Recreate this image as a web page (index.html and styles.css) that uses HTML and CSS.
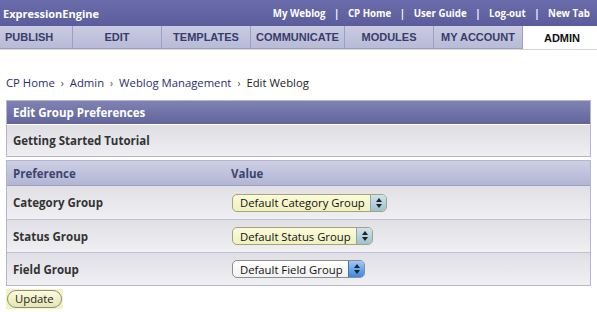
FILE: index.html
```html
<!DOCTYPE html>
<html lang="en">
<head>
  <meta charset="UTF-8" />
  <title>ExpressionEngine - Edit Weblog</title>
  <link rel="stylesheet" href="styles.css">
</head>
<body>

<div class="topbar">
  <span class="brand">ExpressionEngine</span>
  <nav class="toplinks">
    <a href="#">My Weblog</a><span class="sep">|</span><a href="#">CP Home</a><span class="sep">|</span><a href="#">User Guide</a><span class="sep">|</span><a href="#">Log-out</a><span class="sep">|</span><a href="#">New Tab</a>
  </nav>
</div>

<ul class="tabs">
  <li>PUBLISH</li>
  <li>EDIT</li>
  <li>TEMPLATES</li>
  <li>COMMUNICATE</li>
  <li>MODULES</li>
  <li>MY ACCOUNT</li>
  <li class="active">ADMIN</li>
</ul>

<div class="content">
  <div class="crumbs">
    <a href="#">CP Home</a><span class="arr">›</span><a href="#">Admin</a><span class="arr">›</span><a href="#">Weblog Management</a><span class="arr">›</span><span class="here">Edit Weblog</span>
  </div>

  <table class="box">
    <tr><th class="title">Edit Group Preferences</th></tr>
    <tr><td class="plain">Getting Started Tutorial</td></tr>
  </table>

  <table class="box prefs">
    <tr class="head">
      <th class="col1">Preference</th>
      <th>Value</th>
    </tr>
    <tr>
      <td class="col1">Category Group</td>
      <td><span class="select filled">Default Category Group<i class="knob"></i></span></td>
    </tr>
    <tr>
      <td class="col1">Status Group</td>
      <td><span class="select filled">Default Status Group<i class="knob"></i></span></td>
    </tr>
    <tr>
      <td class="col1">Field Group</td>
      <td><span class="select">Default Field Group<i class="knob blue"></i></span></td>
    </tr>
  </table>

  <div class="submit"><button>Update</button></div>
</div>

</body>
</html>
```

FILE: styles.css
```css
* {
  box-sizing: border-box;
}
body {
  margin: 0;
  font-family: "Open Sans", "DejaVu Sans", sans-serif;
  font-size: 11.5px;
  color: #222;
  background: #fff;
}
a {
  text-decoration: none;
}

/* top bar */
.topbar {
  display: flex;
  justify-content: space-between;
  align-items: center;
  height: 26px;
  padding: 0 7px 0 3px;
  background: linear-gradient(#6a6cab, #5a5c9c);
  color: #fff;
  font-weight: bold;
  font-size: 11px;
}
.toplinks {
  display: flex;
  font-size: 9.7px;
}
.toplinks a {
  color: #fff;
}
.toplinks .sep {
  margin: 0 8.5px;
}

/* tabs */
.tabs {
  display: flex;
  margin: 0;
  padding: 0;
  list-style: none;
  height: 24px;
  background: #fff;
  border-bottom: 1px solid #d6d6de;
}
.tabs li {
  display: flex;
  align-items: center;
  justify-content: center;
  font-family: "Liberation Sans", Arial, sans-serif;
  font-weight: bold;
  font-size: 11px;
  color: #383c6c;
  background: linear-gradient(#c9cbe2, #b8bbd7);
  border-right: 1px solid #9c9fc4;
  border-bottom: 1px solid #9c9fc4;
}
.tabs li:nth-child(1) { width: 73px; justify-content: flex-start; padding-left: 5px; }
.tabs li:nth-child(2) { width: 89px; }
.tabs li:nth-child(3) { width: 89px; }
.tabs li:nth-child(4) { width: 94px; }
.tabs li:nth-child(5) { width: 89px; }
.tabs li:nth-child(6) { width: 89px; }
.tabs li.active {
  flex: 1;
  background: #fff;
  border: none;
  color: #111;
  padding-left: 4px;
}

/* content */
.content {
  padding: 0 6px;
}
.crumbs {
  margin: 25px 0 10px;
  font-size: 11.3px;
  color: #222;
}
.crumbs a {
  color: #2a2e72;
}
.crumbs .arr {
  margin: 0 6px;
  font-size: 10px;
  color: #444;
}

table.box {
  width: 585px;
  border-collapse: separate;
  border-spacing: 0;
  border: 1px solid #b4b5d2;
  margin-bottom: 3px;
}
.box th.title {
  height: 24px;
  padding: 0 6px;
  text-align: left;
  color: #fff;
  background: linear-gradient(#7f82b2, #62659c);
  border-bottom: 1px solid #fff;
}
.box td.plain {
  height: 31px;
  padding: 0 6px;
  font-weight: bold;
  color: #333;
  background: linear-gradient(#dedee3, #efeff2);
}

.prefs tr.head th {
  height: 25px;
  padding: 0;
  text-align: left;
  color: #40436e;
  background: linear-gradient(#cdcfe4, #b3b6d4);
  border-bottom: 1px solid #9c9fc4;
}
.prefs tr.head th.col1 {
  padding-left: 6px;
}
.prefs td {
  height: 33px;
  padding: 0 6px 0 0;
  background: linear-gradient(#dfdfe5, #f0f0f3);
  border-top: 1px solid #bfc0d6;
}
.prefs tr:nth-child(2) td {
  border-top: none;
}
.prefs .col1 {
  width: 224px;
  padding-left: 6px;
  font-weight: bold;
  color: #333;
}

/* aqua-ish select */
.select {
  display: inline-flex;
  align-items: center;
  height: 18px;
  margin-left: 1px;
  padding-left: 7px;
  border: 1px solid #8e8e8e;
  border-radius: 5px;
  background: linear-gradient(#ffffff, #f1f1f1);
  font-size: 11.3px;
  color: #111;
  overflow: hidden;
}
.select.filled {
  background: linear-gradient(#fbfbd8, #f0f0c0);
  border-color: #a3a37c;
}
.knob {
  position: relative;
  width: 16px;
  height: 16px;
  margin-left: 5px;
  background: linear-gradient(#cfe3ea, #9cc1cf);
  border-left: 1px solid #8fa5ad;
}
.knob.blue {
  background: linear-gradient(#9ec8f7, #3d86e6);
  border-left-color: #4a6fa6;
}
.knob::before,
.knob::after {
  content: "";
  position: absolute;
  left: 5px;
  border-left: 3px solid transparent;
  border-right: 3px solid transparent;
}
.knob::before {
  top: 3px;
  border-bottom: 4px solid #222;
}
.knob::after {
  bottom: 3px;
  border-top: 4px solid #222;
}

.submit {
  display: inline-block;
  padding: 1px;
  background: #f3f3c9;
}
.submit button {
  height: 18px;
  padding: 0 7px;
  font-family: "Open Sans", "DejaVu Sans", sans-serif;
  font-size: 11.3px;
  line-height: 14px;
  color: #222;
  border: 1px solid #8f8f74;
  border-radius: 9px;
  background: linear-gradient(#fbfbde, #e6e6b4);
}
```
